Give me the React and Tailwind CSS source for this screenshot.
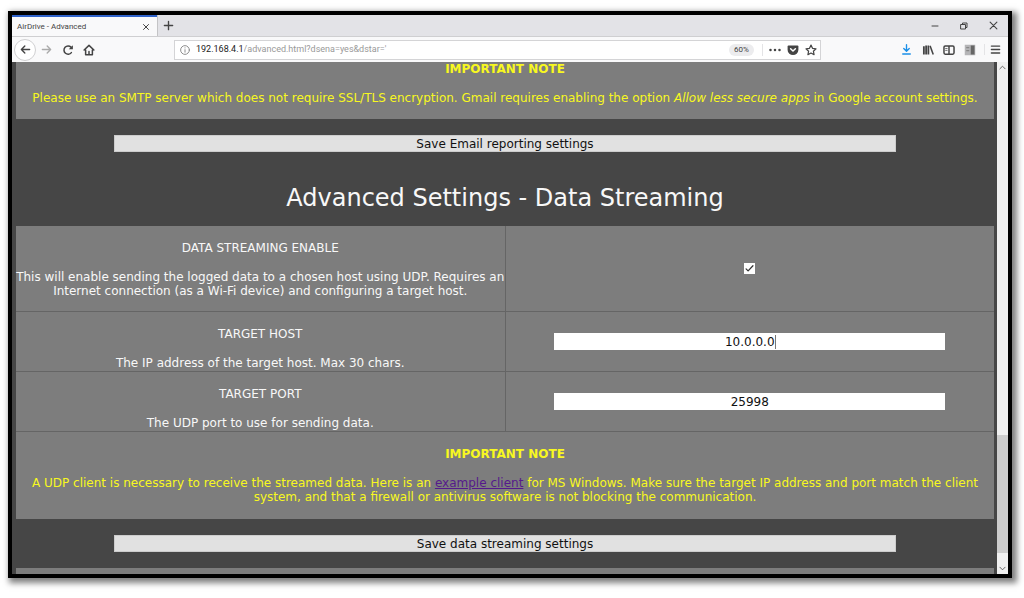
import React from 'react';

const Icon = ({ className = 'size-3', children, ...rest }) => (
  <svg
    viewBox="0 0 16 16"
    fill="none"
    stroke="currentColor"
    strokeWidth="2"
    strokeLinecap="round"
    strokeLinejoin="round"
    className={className}
    aria-hidden="true"
    {...rest}
  >
    {children}
  </svg>
);

const ToolButton = ({ label, className = 'w-[21px]', children }) => (
  <button type="button" aria-label={label} className={`flex shrink-0 items-center justify-center ${className}`}>
    {children}
  </button>
);

const TabStrip = () => (
  <div className="flex h-[22px] shrink-0 items-stretch border-b border-[#cfcfd1] bg-[#e3e3e7]">
    <div className="flex w-[145px] shrink-0 items-center justify-between border-t-2 border-[#2f62c9] bg-[#f9f9fa] pr-[5px] pl-[5px] text-[8px]">
      <span>AirDrive - Advanced</span>
      <ToolButton label="Close tab" className="w-3">
        <Icon className="size-2"><path d="M3 3l10 10M13 3L3 13" /></Icon>
      </ToolButton>
    </div>
    <ToolButton label="New tab" className="w-[22px] border-l border-[#c4c4c6]">
      <Icon className="size-[11px]"><path d="M8 2v12M2 8h12" /></Icon>
    </ToolButton>
    <div className="ml-auto flex">
      <ToolButton label="Minimize" className="w-[29px]">
        <Icon className="size-2"><path d="M2 8h12" /></Icon>
      </ToolButton>
      <ToolButton label="Restore" className="w-[29px]">
        <Icon className="size-2"><path d="M2 5h9v9H2zM5 5V2h9v9h-3" /></Icon>
      </ToolButton>
      <ToolButton label="Close" className="w-[30px]">
        <Icon className="size-[9px]"><path d="M2 2l12 12M14 2L2 14" /></Icon>
      </ToolButton>
    </div>
  </div>
);

const AddressBar = () => (
  <div className="mr-[75px] ml-[75px] flex h-[20px] min-w-0 flex-1 items-center border border-[#d4d4d6] bg-white pl-[5px] text-[9px]">
    <Icon className="mr-[6px] size-[10px] shrink-0 text-[#888]" strokeWidth="1.5">
      <circle cx="8" cy="8" r="7" />
      <path d="M8 7.5v4M8 4.5v.2" />
    </Icon>
    <label htmlFor="url" className="text-[#222]">192.168.4.1</label>
    <input id="url" defaultValue="/advanced.html?dsena=yes&dstar='" className="min-w-0 flex-1 bg-transparent text-[#999] outline-none" />
    <button type="button" className="mr-2 h-3 w-[25px] rounded-full bg-[#ececee] text-[8px]">60%</button>
    <div className="flex h-3 border-l border-[#e4e4e6] pl-[3px]">
      <ToolButton label="Page actions" className="w-[18px]">
        <Icon fill="currentColor" stroke="none">
          <circle cx="2" cy="8" r="1.7" />
          <circle cx="8" cy="8" r="1.7" />
          <circle cx="14" cy="8" r="1.7" />
        </Icon>
      </ToolButton>
      <ToolButton label="Save to Pocket" className="w-[18px]">
        <Icon>
          <path d="M2 2h12a1.2 1.2 0 0 1 1.2 1.2V7.5A7.2 7.2 0 0 1 .8 7.5V3.2A1.2 1.2 0 0 1 2 2z" fill="currentColor" stroke="none" />
          <path d="M4.8 6.3L8 9.400l3.200-3.100" stroke="white" />
        </Icon>
      </ToolButton>
      <ToolButton label="Bookmark" className="w-[18px]">
        <Icon strokeWidth="1.6">
          <path d="M8 1.500l2 4.300 4.700.6-3.500 3.200.9 4.700L8 12l-4.100 2.300.9-4.700L1.300 6.400 6 5.800z" />
        </Icon>
      </ToolButton>
    </div>
  </div>
);

const Toolbar = () => (
  <div className="flex h-[25px] shrink-0 items-center bg-[#f9f9fa] pr-[3px] pl-[2px]">
    <ToolButton label="Back" className="size-[22px] rounded-full border border-[#d0d0d2] bg-white">
      <Icon className="size-[11px]"><path d="M14 8H2M7 3L2 8l5 5" /></Icon>
    </ToolButton>
    <ToolButton label="Forward">
      <Icon className="size-[11px] text-[#aaa]"><path d="M2 8h12M9 3l5 5-5 5" /></Icon>
    </ToolButton>
    <ToolButton label="Reload">
      <Icon>
        <path d="M12.5 11.500A5.500 5.500 0 1 1 12 4.200" />
        <path d="M14.500 1.500v5.500H9z" fill="currentColor" stroke="none" />
      </Icon>
    </ToolButton>
    <ToolButton label="Home">
      <Icon>
        <path d="M1.500 8L8 1.800 14.500 8M3.500 8v6.200h9V8M8 14v-4" />
      </Icon>
    </ToolButton>
    <AddressBar />
    <ToolButton label="Downloads">
      <Icon className="size-[11px] text-[#1a8fe8]"><path d="M8 1v9M4 6.500l4 4 4-4M2.500 14.500h11" /></Icon>
    </ToolButton>
    <ToolButton label="Library">
      <Icon strokeLinecap="butt"><path d="M2.500 3v11M5.500 2v12M8.500 2v12" strokeWidth="2.400" /><path d="M10.800 2.500L15 14" /></Icon>
    </ToolButton>
    <ToolButton label="Sidebars">
      <Icon><path d="M3 2.500h10a1.700 1.700 0 0 1 1.700 1.700v7.600a1.700 1.700 0 0 1-1.700 1.700H3a1.700 1.700 0 0 1-1.700-1.700V4.200A1.700 1.700 0 0 1 3 2.500zM8 3v10" /><path d="M3.500 6h2M3.500 8.500h2" strokeWidth="1" /></Icon>
    </ToolButton>
    <ToolButton label="Reader">
      <Icon stroke="none">
        <path d="M1 1h14v14H1z" fill="#b5b5b7" />
        <path d="M9 2h5v12H9z" fill="#666" />
        <path d="M3 4h4v1.500H3zM3 8h4v1.500H3z" fill="#888" />
      </Icon>
    </ToolButton>
    <ToolButton label="Menu" className="ml-1 w-[21px] border-l border-[#e4e4e6]">
      <Icon className="size-[11px]"><path d="M2 3h12M2 8h12M2 13h12" /></Icon>
    </ToolButton>
  </div>
);

const SaveButton = ({ children }) => (
  <button type="submit" className="mx-auto my-4 block h-[17px] w-4/5 border border-[#ccc] bg-[#e1e1e1] leading-[14px] text-[#111]">
    {children}
  </button>
);

const SettingRow = ({ id, title, description, className = 'pb-px', children }) => (
  <tr className="border-b border-[#656565]">
    <td className={`w-1/2 border-r border-[#656565] pt-[15px] ${className}`}>
      <label htmlFor={id} className="block">{title}</label>
      <p className="mt-[15px]">{description}</p>
    </td>
    <td className="w-1/2 align-middle">{children}</td>
  </tr>
);

const textInput = 'mx-auto block h-[17px] w-4/5 bg-white text-center text-[#111] outline-none';

const Scrollbar = () => (
  <div className="flex w-[11px] shrink-0 flex-col bg-[#f0f0f0] text-[#555]">
    <Icon className="mx-auto my-[2px] size-[7px] shrink-0"><path d="M2 11l6-6 6 6" /></Icon>
    <div className="flex-[362]" />
    <div className="flex-[118] bg-[#cdcdcd]" />
    <div className="flex-[10]" />
    <Icon className="mx-auto my-[2px] size-[7px] shrink-0"><path d="M2 5l6 6 6-6" /></Icon>
  </div>
);

const App = () => {
  return (
    <div className="h-screen overflow-hidden bg-white pt-[11px] pr-3 pb-5 pl-2">
      <div className="flex h-full flex-col border-4 border-black font-[Roboto,sans-serif] text-[#444] shadow-[3px_3px_6px_2px_rgba(0,0,0,0.5)]">
        <TabStrip />
        <Toolbar />

        <div className="flex min-h-0 flex-1">
          <form
            onSubmit={(e) => e.preventDefault()}
            className="flex min-w-0 flex-1 flex-col overflow-hidden bg-[#464646] pr-[3px] pl-1 text-center font-['DejaVu_Sans',Verdana,sans-serif] text-[12px] leading-[14px] text-[#f8f8f8]"
          >
            {/* Email reporting */}
            <div className="shrink-0 bg-[#7d7d7d] px-1 pb-[14px] text-[#f8f820]">
              <p className="font-bold">IMPORTANT NOTE</p>
              <p className="mt-[15px]">
                Please use an SMTP server which does not require SSL/TLS encryption. Gmail requires enabling the option{' '}
                <i>Allow less secure apps</i> in Google account settings.
              </p>
            </div>
            <div className="shrink-0">
              <SaveButton>Save Email reporting settings</SaveButton>
            </div>

            {/* Data streaming */}
            <h1 className="shrink-0 pt-4 pb-[14px] text-[24px] leading-7">Advanced Settings - Data Streaming</h1>
            <table className="w-full shrink-0 table-fixed border-collapse bg-[#7d7d7d]">
              <tbody>
                <SettingRow
                  id="stream"
                  title="DATA STREAMING ENABLE"
                  description="This will enable sending the logged data to a chosen host using UDP. Requires an Internet connection (as a Wi-Fi device) and configuring a target host."
                  className="pb-[13px]"
                >
                  <div className="relative mx-auto size-[11px]">
                    <input id="stream" type="checkbox" defaultChecked className="block size-[11px] appearance-none bg-white" />
                    <Icon className="pointer-events-none absolute inset-0 size-[11px] text-[#333]" strokeWidth="1.8">
                      <path d="M3 8.500l3 3 7-7.500" />
                    </Icon>
                  </div>
                </SettingRow>
                <SettingRow id="host" title="TARGET HOST" description="The IP address of the target host. Max 30 chars.">
                  <div className="relative">
                    <input id="host" type="text" maxLength={30} defaultValue="10.0.0.0" className={textInput} />
                    <span className="absolute top-[2px] left-1/2 ml-[25px] h-[14px] w-px bg-[#777]" />
                  </div>
                </SettingRow>
                <SettingRow id="port" title="TARGET PORT" description="The UDP port to use for sending data.">
                  <input id="port" type="text" defaultValue="25998" className={textInput} />
                </SettingRow>
                <tr>
                  <td colSpan={2} className="px-1 py-[15px] text-[#f8f820]">
                    <p className="font-bold">IMPORTANT NOTE</p>
                    <p className="mt-[15px]">
                      A UDP client is necessary to receive the streamed data. Here is an{' '}
                      <a href="#client" className="text-[#551a8b] underline">example client</a> for MS Windows. Make sure the
                      target IP address and port match the client system, and that a firewall or antivirus software is not
                      blocking the communication.
                    </p>
                  </td>
                </tr>
              </tbody>
            </table>
            <div className="shrink-0">
              <SaveButton>Save data streaming settings</SaveButton>
            </div>
            <div className="flex-1 bg-[#7d7d7d]" />
          </form>
          <Scrollbar />
        </div>
      </div>
    </div>
  );
};

export default App;
